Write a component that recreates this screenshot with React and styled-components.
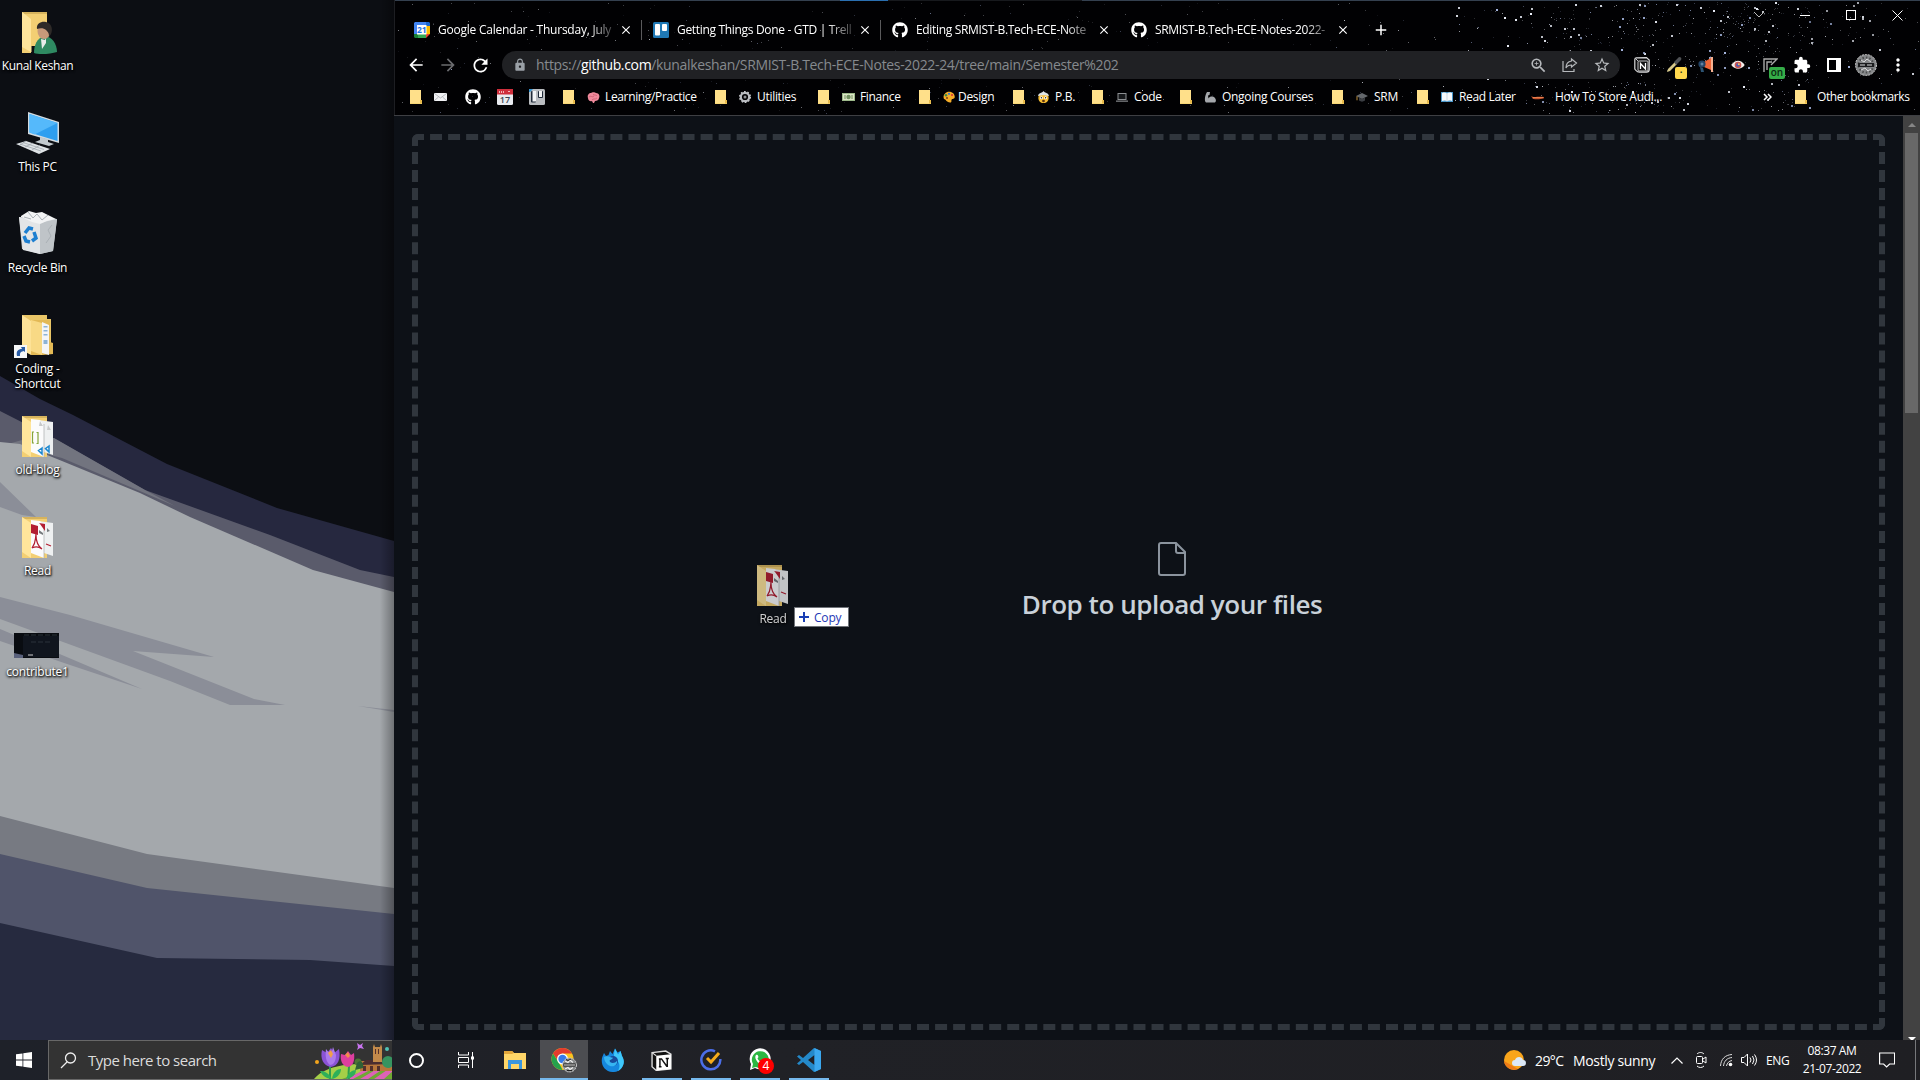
import React from 'react';
import styled, { createGlobalStyle, css } from 'styled-components';
import { FaGithub } from 'react-icons/fa';
import { MdArrowBack, MdArrowForward, MdRefresh, MdLock, MdZoomIn, MdStarBorder, MdExtension, MdMoreVert, MdClose, MdAdd } from 'react-icons/md';

const Global = createGlobalStyle`
  * { box-sizing: border-box; }
  body { margin: 0; background: #0c0d12; overflow: hidden; }
  svg { display: block; flex: none; }
`;
const font = '"Open Sans", "Noto Sans", sans-serif';

const Screen = styled.div`
  width: 1920px; height: 1080px; display: flex; flex-direction: column; overflow: hidden;
  font-family: ${font}; color: #fff; font-size: 12px;
`;
const Main = styled.div`display: flex; height: 1040px;`;

/* Desktop */
const Desktop = styled.div`position: relative; width: 394px; height: 1040px; overflow: hidden; background: #0c0e13;`;
const Wallpaper = styled.svg`position: absolute; inset: 0;`;
const IconColumn = styled.div`position: relative; display: flex; flex-direction: column; width: 75px;`;
const DesktopItem = styled.div`
  height: 101px; padding-top: 8px; display: flex; flex-direction: column; align-items: center;
`;
const IconBox = styled.div`width: 48px; height: 50px; flex: none;`;
const ItemLabel = styled.div`
  font-size: 12px; line-height: 15px; text-align: center; white-space: pre; letter-spacing: ${p => p.$ls || -0.35}px;
  text-shadow: 1px 1px 2px #000, 0 1px 3px #000;
`;

/* Browser */
const Browser = styled.div`width: 1526px; height: 1040px; display: flex; flex-direction: column; position: relative;`;
const Header = styled.div`position: relative; height: 116px; background: #010103; border-bottom: 1px solid #3e3f43;`;
const Sky = styled.svg`position: absolute; left: 0; top: 0;`;
const HeaderRows = styled.div`position: relative; display: flex; flex-direction: column;`;
const TabStrip = styled.div`display: flex; height: 51px; padding: 9px 0 0 20px; align-items: flex-start;`;
const Tab = styled.div`
  width: 239px; height: 42px; display: flex; align-items: center; flex: none;
`;
const TabTitle = styled.div`
  width: 176px; margin-left: 8px; padding-bottom: 2px; font-size: 12px; letter-spacing: ${p => p.$ls}px; white-space: nowrap;
  mask-image: linear-gradient(90deg, #000 150px, rgba(0, 0, 0, 0.2) 176px);
`;
const TabClose = styled.div`margin-left: 4px; width: 16px; display: flex; justify-content: center;`;
const TabDivider = styled.div`margin-left: 7px; width: 1px; height: 20px; background: ${p => p.$on ? '#5a5a5c' : 'transparent'};`;
const NewTab = styled.div`height: 42px; display: flex; align-items: center; margin-left: 2px;`;
const WindowControls = styled.div`margin-left: auto; margin-top: -9px; height: 30px; display: flex; flex: none;`;
const Control = styled.div`width: 46px; height: 30px; display: flex; align-items: center; justify-content: center;`;

const Toolbar = styled.div`display: flex; align-items: center; height: 28px; padding-left: 6px;`;
const NavButton = styled.div`width: 32px; display: flex; justify-content: center; color: ${p => p.$dim ? '#6b6c6f' : '#fff'};`;
const Address = styled.div`
  margin-left: 6px; width: 1118px; height: 28px; border-radius: 14px; background: #202124; display: flex; align-items: center;
  padding: 0 2px 0 11px; color: #9aa0a6; flex: none;
`;
const Url = styled.div`
  margin-left: 9px; padding-bottom: 1px; font-size: 14px; letter-spacing: -0.34px; color: #868a8e; flex: 1; white-space: nowrap;
  b { color: #fff; font-weight: 400; }
`;
const AddressAction = styled.div`width: 32px; display: flex; justify-content: center; color: #b6b9bc;`;
const Extensions = styled.div`display: flex; margin-left: 6px;`;
const Extension = styled.div`width: 32px; height: 28px; display: flex; align-items: center; justify-content: center; position: relative;`;
const Badge = styled.div`
  position: absolute; left: ${p => p.$x}px; top: 16px; width: ${p => p.$w}px; height: 12px; border-radius: 2px;
  background: ${p => p.$c}; color: #0b2a12; font: 600 10px/11px ${font}; text-align: center;
`;

const BookmarkBar = styled.div`display: flex; height: 36px; align-items: center; padding-left: 16px;`;
const Bookmark = styled.div`width: ${p => p.$w}px; display: flex; align-items: center; flex: none; height: 20px;`;
const MarkIcon = styled.div`margin-left: ${p => p.$m}px; width: ${p => p.$w}px; display: flex;`;
const MarkText = styled.div`margin-left: ${p => p.$m}px; padding-bottom: 1px; font-size: 12px; white-space: nowrap; letter-spacing: ${p => p.$ls}px;`;
const BarDivider = styled.div`width: 1px; height: 16px; background: #4a4b4f; margin-right: 13px;`;

const Page = styled.div`display: flex; height: 924px; background: #0d1117;`;
const PageBody = styled.div`width: 1509px; padding: 18px 18px 10px 18px; height: 924px;`;
const DropZone = styled.div`
  width: 1473px; height: 896px; border: 6px dashed #30363d; border-radius: 6px; display: flex; flex-direction: column;
  align-items: center; justify-content: center; padding-left: 47px;
`;
const DropText = styled.div`
  margin-top: 9px; font-size: 26px; line-height: 38px; font-weight: 600; color: #c9d1d9; letter-spacing: ${p => p.$ls}px; white-space: nowrap;
`;
const Scrollbar = styled.div`width: 17px; background: #424242; display: flex; flex-direction: column; align-items: center;`;
const ScrollArrow = styled.div`height: 17px; display: flex; align-items: center;`;
const Thumb = styled.div`width: 13px; height: 280px; background: #686868;`;
const DownArrow = styled.div`margin-top: auto;`;

const DragGhost = styled.div`
  position: absolute; left: 348px; top: 561px; width: 62px; opacity: 0.8; display: flex; flex-direction: column; align-items: center; gap: 2px;
`;
const CopyTip = styled.div`
  position: absolute; left: 400px; top: 607px; width: 55px; height: 20px; background: #fff; border: 1px solid #70747a; display: flex;
  align-items: center; gap: 5px; padding-left: 4px; color: #1d37b5; font-size: 12px; letter-spacing: -0.2px;
`;

/* Taskbar */
const Taskbar = styled.div`height: 40px; width: 1920px; display: flex; background: linear-gradient(90deg, #1e2129, #202126 40%, #1f1f23);`;
const Start = styled.div`width: 48px; display: flex; align-items: center; justify-content: center;`;
const Search = styled.div`
  width: 344px; height: 40px; background: #333333; border: 1px solid #686868; display: flex; align-items: center;
  padding-left: 11px; color: #dcdcdc; font-size: 15px; letter-spacing: ${p => p.$ls}px; border-right: 0;
  span { margin-left: 11px; white-space: nowrap; }
`;
const Spring = styled.div`margin-left: auto; height: 38px;`;
const Apps = styled.div`display: flex;`;
const TaskButton = styled.div`
  width: 49px; height: 40px; display: flex; align-items: center; justify-content: center; position: relative;
  ${p => p.$active && css`background: #4c4d51; border-bottom: 2px solid #76b9ed; padding-top: 2px; width: 48px; margin: 0 0 0 1px;`}
  ${p => p.$open && css`background: linear-gradient(#76b9ed, #76b9ed) center bottom / 40px 2px no-repeat;`}
`;
const Count = styled.div`
  position: absolute; left: 23px; top: 18px; width: 16px; height: 16px; border-radius: 50%; background: #f00; font-size: 12px; line-height: 16px; text-align: center;
`;
const Tray = styled.div`margin-left: auto; display: flex; align-items: center; width: 418px; font-size: 14px;`;
const TrayText = styled.div`width: ${p => p.$w}px; padding-left: ${p => p.$pl || 0}px; font-size: ${p => p.$s || 14}px; letter-spacing: ${p => p.$ls || -0.35}px; white-space: nowrap;`;
const TrayIcon = styled.div`width: ${p => p.$w}px; display: flex; justify-content: center;`;
const Clock = styled.div`width: 84px; font-size: 12px; line-height: 18px; text-align: center; letter-spacing: -0.4px; padding-bottom: 1px;`;
const ShowDesktop = styled.div`width: 5px; height: 40px; border-left: 1px solid #77787b; margin-left: auto;`;

const makeRandom = seed => () => {
  seed = (seed + 0x6d2b79f5) | 0;
  let t = Math.imul(seed ^ (seed >>> 15), 1 | seed);
  t = (t + Math.imul(t ^ (t >>> 7), 61 | t)) ^ t;
  return ((t ^ (t >>> 14)) >>> 0) / 4294967296;
};

/* count, x range, y range, brightness ceiling; the sky is densest towards the right */
const starRegions = [
  [330, 2, 1000, 2, 113, 0.5],
  [45, 2, 1000, 2, 113, 0.95],
  [130, 1000, 1526, 2, 113, 1],
  [60, 1060, 1240, 2, 50, 1],
  [60, 1150, 1290, 2, 50, 0.9],
  [200, 1240, 1420, 2, 113, 0.9],
  [55, 1290, 1390, 2, 70, 1],
  [22, 1325, 1365, 14, 32, 1],
  [80, 1130, 1290, 82, 113, 0.95],
  [70, 1330, 1500, 2, 45, 0.8],
];
const stars = (() => {
  const r = makeRandom(4217);
  const out = [];
  starRegions.forEach(([n, x0, x1, y0, y1, max]) => {
    for (let i = 0; i < n; i++) {
      const b = r();
      out.push([
        Math.round(x0 + r() * (x1 - x0)), Math.round(y0 + r() * (y1 - y0)),
        x0 >= 1000 && b > 0.84 ? 2 : 1, (0.18 + b * b * 0.82) * max,
      ]);
    }
  });
  return out;
})();

const StarField = () => (
  <Sky width="1526" height="115" shapeRendering="crispEdges">
    <rect width="1526" height="1" fill="#34404f" />
    <rect x="446" width="48" height="1" fill="#2a6fb0" />
    <rect x="494" width="194" height="1" fill="#17191d" />
    <rect x="0" width="1" height="115" fill="#1d1e22" />
    {stars.map(([x, y, w, o], i) => <rect key={i} x={x} y={y} width={w} height={w} fill={i % 3 ? '#eef2fc' : '#a5b5de'} opacity={o} />)}
  </Sky>
);

const Calendar = () => (
  <svg width="16" height="16" viewBox="0 0 16 16">
    <path d="M1 0h11v4H4v8H0V1z" fill="#4285f4" /><path d="M12 0h3l1 1v3h-4z" fill="#1967d2" />
    <path d="M12 4h4v8h-4z" fill="#fbbc04" /><path d="M4 12h8v4H4z" fill="#34a853" /><path d="M0 12h4v4H1l-1-1z" fill="#188038" />
    <path d="M12 12h4l-4 4z" fill="#ea4335" /><path d="M3 3h9.500v9.500H3z" fill="#fff" />
    <text x="7.800" y="11" fontSize="8.500" fontWeight="700" textAnchor="middle" fill="#1a73e8" fontFamily="Open Sans, sans-serif">21</text>
  </svg>
);
const Trello = ({ light }) => (
  <svg width="16" height="16" viewBox="0 0 16 16">
    <rect width="16" height="16" rx="1.500" fill={light ? '#b9bcc0' : '#1f78b4'} />
    <rect x="2" y="2" width="5" height="11.500" rx="1" fill={light ? '#202a38' : '#fff'} /><rect x="9" y="2" width="5" height="7" rx="1" fill={light ? '#202a38' : '#fff'} />
    {light && <><rect x="3.500" y="2" width="3.500" height="10.500" fill="#f3f4f5" /><path d="M10 2h3v6h-3z" fill="#f3f4f5" /><path d="M0 0h4L1 3H0z" fill="#3494d0" /></>}
  </svg>
);
const MiniFolder = () => (
  <svg width="12" height="14" viewBox="0 0 12 14"><path d="M0 0h11v10h1v4H0z" fill="#f8d775" /><path d="M0 0h11v13H0z" fill="#ffe08a" /><path d="M10 10h2v3.500h-2z" fill="#e8ba4a" /></svg>
);
const Mail = () => <svg width="13" height="10" viewBox="0 0 13 10"><rect y="1" width="13" height="8" rx="1" fill="#f1f2f4" /><path d="M.5 1.500l6 4.500 6-4.500M.5 8.500L4.500 5M12.500 8.500l-4-3.500" fill="none" stroke="#a9acb1" strokeWidth=".8" /></svg>;
const RedCal = () => (
  <svg width="16" height="16" viewBox="0 0 16 16"><rect width="16" height="16" rx="1.500" fill="#e9ebef" /><path d="M0 0h16v5.500H0z" fill="#cf2f3c" />
    <path d="M2 2h1v2H2zM4 2h1v2H4zM6 2h1v2H6zM11 2h2v1h-2z" fill="#f6b6ba" />
    <text x="8" y="14" fontSize="9" fontWeight="600" textAnchor="middle" fill="#39434f" fontFamily="Open Sans, sans-serif">17</text></svg>
);
const Emoji = ({ kind }) => {
  const art = {
    brain: <><path d="M1 7C0 4 2 2 4 2c1-1 4-1 5 0 3 0 4 3 3 5 0 2-2 3-4 3l-1 2H6l-1-2C3 11 1 9 1 7z" fill="#f08a9c" /><path d="M2 6c2-2 3 1 5-1M5 9c1-2 3 0 5-2M6 3c1 2 3 0 4 2" stroke="#c95a70" fill="none" strokeWidth=".8" /></>,
    gear: <><circle cx="6" cy="6" r="4.200" fill="none" stroke="#b9bcc0" strokeWidth="2.200" /><circle cx="6" cy="6" r="5.400" fill="none" stroke="#c9cbce" strokeWidth="1.300" strokeDasharray="1.700 1.700" /><circle cx="6" cy="6" r="1.500" fill="#8d9094" /></>,
    money: <><rect x="0" y="2" width="13" height="8" fill="#9db98a" /><rect x="1" y="3" width="11" height="6" fill="#dbe6c6" /><circle cx="6.500" cy="6" r="2.200" fill="#708f5f" /><path d="M3 4v4M10 4v4" stroke="#6c8a58" /></>,
    palette: <><path d="M6 .8c4 0 6 3 5.700 5.400-.2 2-2.300 1.400-3 2.200-.8 1 .5 3-1.400 3C3 11.500 3 8 1 8-.5 5 2 .8 6 .8z" fill="#f5ad28" /><circle cx="3" cy="4.300" r="1.200" fill="#3b8e46" /><circle cx="6" cy="2.800" r="1.100" fill="#3477d1" /><circle cx="9" cy="4" r="1.100" fill="#da3838" /><circle cx="4" cy="7" r="1" fill="#7a3e1b" /></>,
    face: <><circle cx="6.500" cy="7" r="5.200" fill="#f7bd33" /><path d="M1 5C2 1 4 3 6.500 0 9 3 11 1 12 5 9 4 4 4 1 5z" fill="#dde3e6" /><circle cx="4.400" cy="6.800" r="1.500" fill="#fff" /><circle cx="8.600" cy="6.800" r="1.500" fill="#fff" /><circle cx="4.400" cy="6.800" r=".7" fill="#222" /><circle cx="8.600" cy="6.800" r=".7" fill="#222" /><ellipse cx="6.500" cy="10" rx="1.400" ry="1.200" fill="#5a3212" /></>,
    laptop: <><rect x="1.500" y="2" width="9" height="7" fill="#8d9093" /><rect x="2.500" y="3" width="7" height="5" fill="#16181b" /><path d="M0 9.500h12v1.300H0z" fill="#7c7f83" /></>,
    arm: <path d="M3 1l3 0-.5 3-1.500.5.500 3C6 5 9 5 11 7c1.500 2 1 4 0 4.500H2C0 10 1 4 3 1z" fill="#a4a7ab" />,
    cap: <><path d="M0 5l6-3 6 3-6 3z" fill="#63676c" /><path d="M3 6.500v3c2 1.500 4 1.500 6 0v-3L6 8z" fill="#3b3e43" /><path d="M1 5.300v4" stroke="#bb8a35" /></>,
    book: <><path d="M0 1h12v10H0z" fill="#4b97c9" /><path d="M1 2c2-.7 4-.6 5 .4C7 1.400 9 1.300 11 2v8c-2-.7-4-.6-5 .3-1-1-3-1-5-.3z" fill="#f5f8fa" /><path d="M6 2.400v8" stroke="#bcc9d2" strokeWidth=".7" /></>,
    flame: <><path d="M0 5c3 2 6 0 14 1v1C8 9 4 8 2 8z" fill="#c7552f" /><path d="M2 6.500h10" stroke="#f3925a" strokeWidth=".7" /></>,
  };
  return <svg width="13" height="12" viewBox="0 0 13 12">{art[kind]}</svg>;
};

const FolderBack = () => <><path d="M8 4h25v41H8z" fill="#f3cf73" /><path d="M8 4h25v2H8z" fill="#d6b35d" /></>;
const UserFolder = () => (
  <svg width="48" height="48" viewBox="0 0 48 48"><FolderBack /><path d="M8 4l9 7v33l-9-5z" fill="#ffe59b" /><path d="M17 38h16v9H17z" fill="#0c0e13" /><path d="M17 38v6" stroke="#ffe59b" />
    <path d="M20 45c0-8 3-15 10-17 8 0 13 8 13 16-6 2-18 3-23 1z" fill="#2f8a62" /><path d="M27 31l4 1 1-3v6l-4 6z" fill="#e8ebea" />
    <ellipse cx="30" cy="23" rx="6.500" ry="8" fill="#c79a7a" /><path d="M23 21c-1-6 5-8 9-7 6 1 7 8 5 12l-2 3c0-4-1-5-3-7-2-2-6-2-9-1z" fill="#2e2a28" /></svg>
);
const Pc = () => (
  <svg width="48" height="48" viewBox="0 0 48 48"><path d="M14 3l31 10v21l-31-9z" fill="#d4dbe0" /><path d="M15.500 5l28 9v18l-28-8.500z" fill="#2f9ff0" /><path d="M15.500 5l28 9-23 11.500-5-2z" fill="#55b9fb" />
    <path d="M26 28l8 2v3l6 2-5 2-14-4 5-2z" fill="#c3cacf" /><path d="M2 35l10-3 24 8-11 5z" fill="#dfe3e6" /><path d="M6 35l21 7M9 33.500l21 7M12 32l-6 4M19 34l-8 4M26 36l-8 5" stroke="#9aa1a7" strokeWidth=".7" /></svg>
);
const Bin = () => (
  <svg width="48" height="48" viewBox="0 0 48 48"><g transform="translate(0 -1)"><path d="M5 8l38 2-4 32-13 3-18-5z" fill="#cfd3d7" /><path d="M5 8l21 6v31L9 41z" fill="#e3e5e7" /><path d="M26 14l17-4-4 32-13 3z" fill="#bfc4c8" />
    <path d="M7 7l8-5 7 2 6-1 6 3 8 4-9 2-7 3-8-2-11-5z" fill="#f2f3f4" /><path d="M14 3l5 6 4-4 5 6 6-5M10 8l7 2M38 16l-4 5 3 6-5 7" stroke="#aab0b5" fill="none" />
    <g fill="none" stroke="#1e7fd0" strokeWidth="3.500"><path d="M11 24l4-5 4 1M20 23l2 6-4 3M10 27l2 5 4 1" /></g></g></svg>
);
const Shortcut = () => (
  <svg width="48" height="48" viewBox="0 0 48 48"><path d="M8 4h25v4h4v34H17z" fill="#e9c567" /><path d="M17 9h19v22l3 1v11l-10 1H17z" fill="#e3b955" /><path d="M28 11l7 3v30l-7-2z" fill="#f4f5f6" />
    <path d="M29.500 15h4v1.500h-4zM29.500 19h4v1.500h-4zM29.500 23h4v1.500h-4zM29.500 29h4v4h-4z" fill="#8db3d4" />
    <path d="M8 4l9 6v34l-9-5z" fill="#fde297" /><path d="M17 9l11 3v32l-11-4z" fill="#f8d985" />
    <rect y="34" width="13" height="13" fill="#f5f6f7" /><path d="M3 45c-1-5 1-7 5-7l-1-2h4v5l-1.500-1C6 41 6 42 6 45z" fill="#285ba5" /></svg>
);
const FileFolder = ({ pdf }) => (
  <svg width="48" height="48" viewBox="0 0 48 48"><FolderBack /><path d="M24 8l15 2v33l-12-4z" fill="#eef0f1" /><path d="M17 7l9 1 4 6v31l-13-5z" fill="#fbfbfc" /><path d="M30 12v33" stroke="#a9acae" strokeWidth=".7" />
    {pdf ? <><path d="M17 11l7 2v9l-7-2zM25 10l6 1v7l-5-7z" fill="#b31e32" /><path d="M25 17l4 3v2l-4-2zM33 15l3 3-3 1z" fill="#777b7e" /><path d="M22 21c-1 7 0 9-4 14 2-1 5-3 10 1-4-3-6-7-6-14M32 31l5 2" stroke="#b31e32" strokeWidth="1.200" fill="none" /></>
      : <><path d="M20 20h-1.500v11H20M22.500 20.500H24v11h-1.500" stroke="#86a43a" strokeWidth="1.200" fill="none" /><path d="M28 36l-3.500 2.500L28 42zM35 34l-3.500 2.500L35 40z" fill="none" stroke="#1a86cf" strokeWidth="1.500" /><path d="M26 9l3 5h-4zM34 13l3 5h-4z" fill="#c7c9ca" /></>}
    <path d="M8 4l9 6v35l-9-6z" fill="#ffe59b" /></svg>
);
const Thumbnail = () => (
  <svg width="48" height="48" viewBox="0 0 48 48"><g transform="translate(-1 4)"><rect y="15" x="1" width="45" height="25" fill="#090c11" /><path d="M10 18h36v21H10z" fill="#10151e" /><path d="M11 17h34M18 24h20" stroke="#2a323b" strokeDasharray="5 2" /><path d="M1 35l9 2v3H1z" fill="#59617c" /><path d="M15 37h5" stroke="#ccc" /></g></svg>
);

const desktopItems = [
  ['Kunal Keshan', UserFolder, -0.38], ['This PC', Pc, -0.3], ['Recycle Bin', Bin, -0.3], ['Coding -\nShortcut', Shortcut, -0.2],
  ['old-blog', FileFolder, -0.2], ['Read', FileFolder, -0.3], ['contribute1', Thumbnail, -0.25],
];

const tabs = [
  ['Google Calendar - Thursday, July', <Calendar />, true, -0.24], ['Getting Things Done - GTD | Trell', <Trello />, true, -0.32],
  ['Editing SRMIST-B.Tech-ECE-Note', <FaGithub size={16} />, false, -0.33], ['SRMIST-B.Tech-ECE-Notes-2022-', <FaGithub size={16} />, false, -0.33],
];

const marks = [
  { w: 24, folder: 1 }, { w: 31, icon: <Mail /> }, { w: 32, icon: <FaGithub size={16} /> }, { w: 32, icon: <RedCal /> }, { w: 34, icon: <Trello light /> },
  { w: 152, folder: 1, e: 'brain', t: 'Learning/Practice', ls: -0.35 }, { w: 103, folder: 1, e: 'gear', t: 'Utilities' }, { w: 101, folder: 1, e: 'money', t: 'Finance', ls: -0.35 },
  { w: 94, folder: 1, e: 'palette', t: 'Design', tm: 2 }, { w: 79, folder: 1, e: 'face', t: 'P.B.' }, { w: 88, folder: 1, e: 'laptop', t: 'Code' },
  { w: 152, folder: 1, e: 'arm', t: 'Ongoing Courses' }, { w: 85, folder: 1, e: 'cap', t: 'SRM' }, { w: 114, folder: 1, e: 'book', t: 'Read Later', ls: -0.35 },
];

const NotionMark = ({ s = 18 }) => (
  <svg width={s} height={s} viewBox="0 0 20 20"><path d="M1 2.500L14 1l5 3v14L5 19.500 1 16z" fill="#111" stroke="#ddd" strokeWidth="1.300" /><path d="M5 5.500L19 4v14L5 19.500z" fill="#fff" /><path d="M1 2.500l4 3" stroke="#ddd" />
    <path d="M8.500 16V8.500h1.500l5 7h.5V8M7.500 8.500h2M7.500 16h2.500M14 8h3" stroke="#111" strokeWidth="1.400" fill="none" /></svg>
);
const NotionOutline = () => (
  <svg width="16" height="16" viewBox="0 0 16 16"><path d="M2.500.8L12.500.6l2.700 2.400v9.500c0 2-.8 2.700-2.700 2.700H5.500C4 15.200 3.200 15 2 13.500L.8 12V2.500C.8 1.300 1.300.8 2.500.8z" fill="#0c0c0e" stroke="#d9d9da" strokeWidth="1.200" />
    <rect x="4" y="4" width="10" height="10" rx="1" fill="#111" stroke="#c6c6c8" strokeWidth="1" /><path d="M1.500 1.500L4 4" stroke="#c6c6c8" /><path d="M6.500 12V6.500L11.500 12V6" stroke="#fff" strokeWidth="1.300" fill="none" /></svg>
);
const Cortana = () => <svg width="17" height="17"><circle cx="8.500" cy="8.500" r="6.500" fill="none" stroke="#fff" strokeWidth="2" /></svg>;
const TaskView = () => <svg width="18" height="18" fill="none" stroke="#fff"><path d="M1.500 1v3h10V1M1.500 17v-3h10v3M1.500 6.500h10v5h-10zM15.500 1v16" /><path d="M14 5.500h3v3h-3z" fill="#fff" stroke="none" /></svg>;
const Explorer = () => <svg width="22" height="20" viewBox="0 0 22 20"><path d="M0 1h8l2 2h12v16H0z" fill="#ffd668" /><path d="M0 1h8l2 2-2 1H0z" fill="#e2a63a" /><path d="M4 19v-9h14v9h-3v-5H7v5z" fill="#3b96dd" /></svg>;
const Chrome = () => (
  <svg width="26" height="26" viewBox="0 0 26 26"><circle cx="11.500" cy="12" r="11" fill="#f9c31d" /><path d="M2 6.500A11 11 0 0 1 21 6.500H11.500L7 14z" fill="#e33b2e" /><path d="M2 6.500L8 16l3.500 7A11 11 0 0 1 2 6.500z" fill="#25a24c" />
    <circle cx="11.500" cy="12" r="5.500" fill="#fff" /><circle cx="11.500" cy="12" r="4.200" fill="#377bea" />
    <circle cx="18.500" cy="18" r="7" fill="#8a8c8e" stroke="#ccc" strokeWidth="1" strokeDasharray="2 1" /><path d="M12.500 16.500h12v3h-12z" fill="#161616" /><path d="M14 14l3 1.500 2-2.500 3 2.500M14 22l3-1.500 2 2 3-2M13 18h11" stroke="#f2f2f2" strokeWidth="1.100" fill="none" /><path d="M15 12.500l2 1 3-1.500M16 23.500h5" stroke="#222" fill="none" /></svg>
);
const Firefox = () => (
  <svg width="24" height="24" viewBox="0 0 24 24"><path d="M3 5l2 3 2.500-1L9 3l2.500 3L14 .500l2.500 4 3-1.500L21 8c4 7 0 15.500-8 16C4 24.500-1 16.500 1.300 9z" fill="#1687de" /><path d="M14 .5l3 6 2.500-3.500L21 8c4 6 1 12-4 15 3-6 1-9-2-11.500S13 6 14 .5z" fill="#3fc8fa" /><circle cx="12" cy="13" r="5" fill="#174a9b" /><path d="M3 9c4-2 6 .5 9 .8-.5 1.800-3 1.700-3.500 3 .8 3 5.500 3 7.500 0 1 5.500-6 7.200-9.500 3.700C4.500 14.500 3 12 3 9z" fill="#36b5f2" /></svg>
);
const TickTick = () => <svg width="22" height="22" viewBox="0 0 22 22"><path d="M15 2.300A9.500 9.500 0 1 0 20.300 10" fill="none" stroke="#4b6ee8" strokeWidth="2.500" /><path d="M7 9l4 4 8-9" fill="none" stroke="#f7ac1b" strokeWidth="3" /></svg>;
const WhatsApp = () => <svg width="24" height="24" viewBox="0 0 24 24"><path d="M2 22l1-6a10.500 10.500 0 1 1 4 4z" fill="#fff" /><path d="M4 20l1-4a8.500 8.500 0 1 1 3 3z" fill="#2cb742" /><path d="M8 7c2-1 2 1 2.500 2l-1 1.500c1 2 2 3 4 3.500l1.500-1 2.500 1.500c-1 4-7 2-9-2C7 10.500 7 8.500 8 7z" fill="#fff" /></svg>;
const Code = () => <svg width="24" height="24" viewBox="0 0 24 24"><path d="M17 0l7 3v18l-7 3L6 14l-4 3-2-1.500L4 12 0 8.500 2 7l4 3zM17.500 7L11 12l6.500 5z" fill="#2489ca" fillRule="evenodd" /><path d="M17.500 0L24 3v18l-6.500 3z" fill="#3ba8ef" /></svg>;

const SpringArt = () => (
  <svg width="80" height="38" viewBox="0 0 80 38">
    <path d="M2 38c12-16 48-18 78-12v12z" fill="#a5cf48" /><path d="M30 38l22-8 30-1v9z" fill="#6fa832" />
    <path d="M34 38l18-9h6l-17 9zM48 38l17-10h6l-15 10zM62 38l13-9h7l-10 9z" fill="#de62b6" />
    <path d="M48 20h34v10H48z" fill="#b9763a" /><path d="M48 24l6-5h28v4z" fill="#4b2d30" /><path d="M61 6l1-3 1 3h5l1-3 1 3v15h-9z" fill="#c28a4a" /><path d="M63 8h1v5h-1zM66 8h1v5h-1zM51 25h3v5h-3zM58 25h3v5h-3zM65 25h3v5h-3z" fill="#54302c" />
    <circle cx="76" cy="21" r="6" fill="#379460" /><circle cx="46" cy="21" r="3.500" fill="#4b7434" /><path d="M45 22c4-4 7 0 6 5l-8 2z" fill="#2f6136" />
    <path d="M18 38V23M37 38c-1-6 0-9 0-13" stroke="#2e9e4c" strokeWidth="2" fill="none" /><path d="M20 38C16 31 12 30 8 30c2 4 6 8 12 8zM20 38c1-7 5-10 9-10 0 5-4 9-9 10zM34 38c2-6 6-9 10-9 0 5-4 8-10 9z" fill="#2eb059" />
    <path d="M10 9l5 3 4-5 3 5 5-4c2 10-1 17-8 18-8-1-11-9-9-17z" fill="#8a53d6" /><path d="M14 8l5 6 2-8 3 8c0 7-3 10-6 10-4-3-5-9-4-16z" fill="#ab7aec" /><path d="M16 12l3-3 2 4-2 4z" fill="#f1a04a" />
    <path d="M29 13l4 1 3-4 3 4 3-2c1 8-1 13-6 14-6-1-8-7-7-13z" fill="#dd3f9e" /><path d="M33 14l3-3 2 4-2 2z" fill="#f28d49" />
    <path d="M45 2l3 2 3-2-1 3 2 3-4-1-3 2 1-3z" fill="#c974ef" /><circle cx="5" cy="21" r="2" fill="#f3a51d" /><circle cx="75" cy="8" r="2" fill="#50c2b5" />
  </svg>
);

export default function App() {
  return (
    <Screen>
      <Global />
      <Main>
        <Desktop>
          <Wallpaper width="394" height="1040">
            <defs>
              <linearGradient id="edge"><stop offset="0" stopColor="#000" stopOpacity="0" /><stop offset="1" stopColor="#000" stopOpacity=".32" /></linearGradient>
            </defs>
            <path d="M0 376L40 399 73 415 167 464 277 508 394 541V700H0z" fill="#26283f" />
            <path d="M0 411L57 440 145 490 270 535 360 570 394 577V700H0z" fill="#5a5b6b" />
            <path d="M8 444L22 440 54 438 145 490 175 506 62 458z" fill="#72747f" />
            <path d="M0 442L20 444 62 461 140 493 190 517 313 570 394 592V900H0z" fill="#a4a8ac" />
            <path d="M0 482L36 517 22 515 0 507zM0 597L70 615 214 657 133 651 254 699 285 705H230L170 681 0 619zM0 629L62 655 142 689 70 665 0 641zM358 706L394 710V712z" fill="#8b8e98" />
            <path d="M0 816L147 854 394 888V930H0z" fill="#777a82" />
            <path d="M0 854L147 888 394 914V980H0z" fill="#50546a" />
            <path d="M0 923L157 958 310 960 394 966V1040H0z" fill="#262a3f" />
            <rect x="380" width="14" height="1040" fill="url(#edge)" />
          </Wallpaper>
          <IconColumn>
            {desktopItems.map(([label, Art, ls]) => (
              <DesktopItem key={label}><IconBox><Art pdf={label === 'Read'} /></IconBox><ItemLabel $ls={ls}>{label}</ItemLabel></DesktopItem>
            ))}
          </IconColumn>
        </Desktop>

        <Browser>
          <Header>
            <StarField />
            <HeaderRows>
              <TabStrip>
                {tabs.map(([title, icon, line, ls]) => (
                  <Tab key={title}>{icon}<TabTitle $ls={ls}>{title}</TabTitle><TabClose><MdClose size={14} /></TabClose><TabDivider $on={line} /></Tab>
                ))}
                <NewTab><MdAdd size={18} /></NewTab>
                <WindowControls>
                  <Control><svg width="12" height="8"><path d="M1 1l5 5 5-5" fill="none" stroke="#bbb" /></svg></Control>
                  <Control><svg width="10" height="1"><rect width="10" height="1" fill="#fff" /></svg></Control>
                  <Control><svg width="10" height="10"><rect x=".5" y=".5" width="9" height="9" fill="none" stroke="#fff" /></svg></Control>
                  <Control><svg width="11" height="11"><path d="M.5.5l10 10M10.500.5l-10 10" stroke="#fff" /></svg></Control>
                </WindowControls>
              </TabStrip>
              <Toolbar>
                <NavButton><MdArrowBack size={20} /></NavButton><NavButton $dim><MdArrowForward size={20} /></NavButton><NavButton><MdRefresh size={21} /></NavButton>
                <Address>
                  <MdLock size={14} />
                  <Url>https://<b>github.com</b>/kunalkeshan/SRMIST-B.Tech-ECE-Notes-2022-24/tree/main/Semester%202</Url>
                  <AddressAction><MdZoomIn size={19} /></AddressAction>
                  <AddressAction><svg width="16" height="16" viewBox="0 0 16 16" fill="none" stroke="#b6b9bc" strokeWidth="1.200"><path d="M1 4v10.500h11V12M9.500 2l5 4-5 4V8C6.500 8 5 9 4 11c0-4 2-6.500 5.500-7z" /></svg></AddressAction>
                  <AddressAction><MdStarBorder size={18} /></AddressAction>
                </Address>
                <Extensions>
                  <Extension><NotionOutline /></Extension>
                  <Extension><svg width="16" height="16" viewBox="0 0 16 16"><path d="M1 15l1-3 7-7 2 2-7 7z" fill="#d8c98a" /><path d="M8 5l5-5c2 0 3 1 2 3l-5 5z" fill="#4f5154" /></svg><Badge $x={17} $w={12} $c="#ffd84d">·</Badge></Extension>
                  <Extension><svg width="16" height="16" viewBox="0 0 16 16"><path d="M6 5l7-4v12L6 10z" fill="#ef6537" /><path d="M13 0h2v15h-2z" fill="#f7b190" /><circle cx="4" cy="7" r="3.600" fill="#234365" /><path d="M2 10l3 1 1 4H3z" fill="#2c5373" /><circle cx="4" cy="7" r="1.500" fill="#6483a2" /></svg></Extension>
                  <Extension><svg width="14" height="10" viewBox="0 0 16 12"><path d="M0 6c4-7 12-7 16 0-4 6-12 6-16 0z" fill="#f5eeea" /><circle cx="8" cy="6" r="4" fill="#cc5550" /><circle cx="8" cy="6" r="2.200" fill="#4758bd" /><circle cx="9" cy="5" r="1.200" fill="#f4c25b" /></svg></Extension>
                  <Extension><svg width="16" height="18" viewBox="0 0 16 18" fill="none" stroke="#aaa" strokeWidth="1.400"><path d="M2 16V3h13L9 9M5 14V6h5" /></svg><Badge $x={15} $w={16} $c="#35ad48">on</Badge></Extension>
                  <Extension><MdExtension size={18} /></Extension>
                  <Extension><svg width="14" height="14"><path d="M1 1h12v12H1z" fill="none" stroke="#fff" strokeWidth="2" /><path d="M9 1h4v12H9z" fill="#fff" /></svg></Extension>
                  <Extension><svg width="22" height="22" viewBox="0 0 22 22"><circle cx="11" cy="11" r="10.500" fill="#858789" stroke="#c9c9c9" strokeDasharray="2 1" /><circle cx="11" cy="11" r="7.500" fill="none" stroke="#4a4b4c" strokeWidth="2" strokeDasharray="1.500 2" /><path d="M3 9h16v4H3z" fill="#1b1c1e" /><path d="M5 11h5M12 11h5M6 6l3 2 3-3 4 3M6 16l4-2 3 3 3-2" fill="none" stroke="#d9dadb" /></svg></Extension>
                  <Extension><MdMoreVert size={20} /></Extension>
                </Extensions>
              </Toolbar>
              <BookmarkBar>
                {marks.map((m, i) => (
                  <Bookmark key={i} $w={m.w}>
                    {m.folder && <MiniFolder />}{m.icon}
                    {m.e && <MarkIcon $m={12} $w={13}><Emoji kind={m.e} /></MarkIcon>}
                    {m.t && <MarkText $m={m.tm ?? 5} $ls={m.ls ?? -0.3}>{m.t}</MarkText>}
                  </Bookmark>
                ))}
                <Bookmark $w={232}><MarkIcon $m={0} $w={14}><Emoji kind="flame" /></MarkIcon><MarkText $m={10} $ls={-0.3}>How To Store Audi...</MarkText></Bookmark>
                <Bookmark $w={19}><svg width="9" height="8" viewBox="0 0 9 8"><path d="M1 1l3 3-3 3M5 1l3 3-3 3" fill="none" stroke="#fff" strokeWidth="1.500" /></svg></Bookmark>
                <BarDivider />
                <Bookmark $w={125}><MiniFolder /><MarkText $m={10} $ls={-0.4}>Other bookmarks</MarkText></Bookmark>
              </BookmarkBar>
            </HeaderRows>
          </Header>
          <Page>
            <PageBody>
              <DropZone>
                <svg width="28" height="34" viewBox="0 0 28 34" fill="none" stroke="#8b949e" strokeWidth="2"><path d="M3 1h15l9 9v21a2 2 0 0 1-2 2H3a2 2 0 0 1-2-2V3a2 2 0 0 1 2-2z" /><path d="M18 1v8a2 2 0 0 0 2 2h7" /></svg>
                <DropText $ls={-0.45}>Drop to upload your files</DropText>
              </DropZone>
            </PageBody>
            <Scrollbar>
              <ScrollArrow><svg width="8" height="4"><path d="M0 4l4-4 4 4z" fill="#868686" /></svg></ScrollArrow>
              <Thumb />
              <DownArrow><svg width="8" height="3"><path d="M0 0h8L5 3H3z" fill="#fff" /></svg></DownArrow>
            </Scrollbar>
          </Page>
          <DragGhost><FileFolder pdf /><ItemLabel $ls={-0.3}>Read</ItemLabel></DragGhost>
          <CopyTip><svg width="10" height="10"><path d="M5 0v10M0 5h10" stroke="#1a3fb4" strokeWidth="2" /></svg>Copy</CopyTip>
        </Browser>
      </Main>

      <Taskbar>
        <Start><svg width="16" height="16" viewBox="0 0 16 16" fill="#fff"><path d="M0 2.300l6.500-.9v6.200H0zM7.300 1.300L16 0v7.600H7.300zM0 8.400h6.500v6.200L0 13.700zM7.300 8.400H16V16l-8.700-1.300z" /></svg></Start>
        <Search $ls={-0.5}>
          <svg width="17" height="17" fill="none" stroke="#eee" strokeWidth="1.300"><circle cx="10.500" cy="6" r="5" /><path d="M7 10l-6 6" /></svg>
          <span>Type here to search</span>
          <Spring><SpringArt /></Spring>
        </Search>
        <Apps>
          <TaskButton><Cortana /></TaskButton><TaskButton><TaskView /></TaskButton><TaskButton><Explorer /></TaskButton>
          <TaskButton $active><Chrome /></TaskButton><TaskButton><Firefox /></TaskButton>
          <TaskButton $open><NotionMark s={21} /></TaskButton><TaskButton $open><TickTick /></TaskButton><TaskButton $open><WhatsApp /><Count>4</Count></TaskButton><TaskButton $open><Code /></TaskButton>
        </Apps>
        <Tray>
          <TrayIcon $w={26}><svg width="22" height="20" viewBox="0 0 22 20"><circle cx="10" cy="10" r="10" fill="#f9a51b" /><path d="M0 11a10 10 0 0 0 14 8z" fill="#ee7b16" /><path d="M11 16a3 3 0 0 1 0-6c1-4 7-4 8 0a3 3 0 0 1 0 6z" fill="#dce9f7" /></svg></TrayIcon>
          <TrayText $w={45} $pl={7} $ls={-0.6}>29°C</TrayText>
          <TrayText $w={92}>Mostly sunny</TrayText>
          <TrayIcon $w={23}><svg width="12" height="7"><path d="M.5 6.500L6 1l5.500 5.500" fill="none" stroke="#fff" strokeWidth="1.200" /></svg></TrayIcon>
          <TrayIcon $w={26}><svg width="12" height="16" fill="none" stroke="#fff"><rect x="1.500" y="4.500" width="6" height="7" rx="1" /><path d="M8 7l3-2v6L8 9M2 2c2-2 5-2 7 0M2 14c2 2 5 2 7 0" /></svg></TrayIcon>
          <TrayIcon $w={24}><svg width="13" height="13" fill="none" stroke="#ddd"><path d="M.5 12C1 5 5 1 12 .5M3.500 12C4 7 7 4 12 3.500M6.500 12c.5-3 2.500-5 5.500-5.500" /><circle cx="10.500" cy="10.500" r="1.800" fill="#fff" stroke="none" /></svg></TrayIcon>
          <TrayIcon $w={21}><svg width="16" height="14" fill="none" stroke="#fff"><path d="M.5 4.500H3L6.500 1v12L3 9.500H.5z" /><path d="M9 4.500q2 2.500 0 5M11.500 3q3 4 0 8M13.500 1.500q4 5.500 0 11" /></svg></TrayIcon>
          <TrayText $w={31} $pl={7} $s={12}>ENG</TrayText>
          <Clock>08:37 AM<br />21-07-2022</Clock>
          <TrayIcon $w={26}><svg width="16" height="16" fill="none" stroke="#fff" strokeWidth="1.200"><path d="M.6 1h15v11h-5l-3 3-3-3h-4z" /></svg></TrayIcon>
          <ShowDesktop />
        </Tray>
      </Taskbar>
    </Screen>
  );
}
